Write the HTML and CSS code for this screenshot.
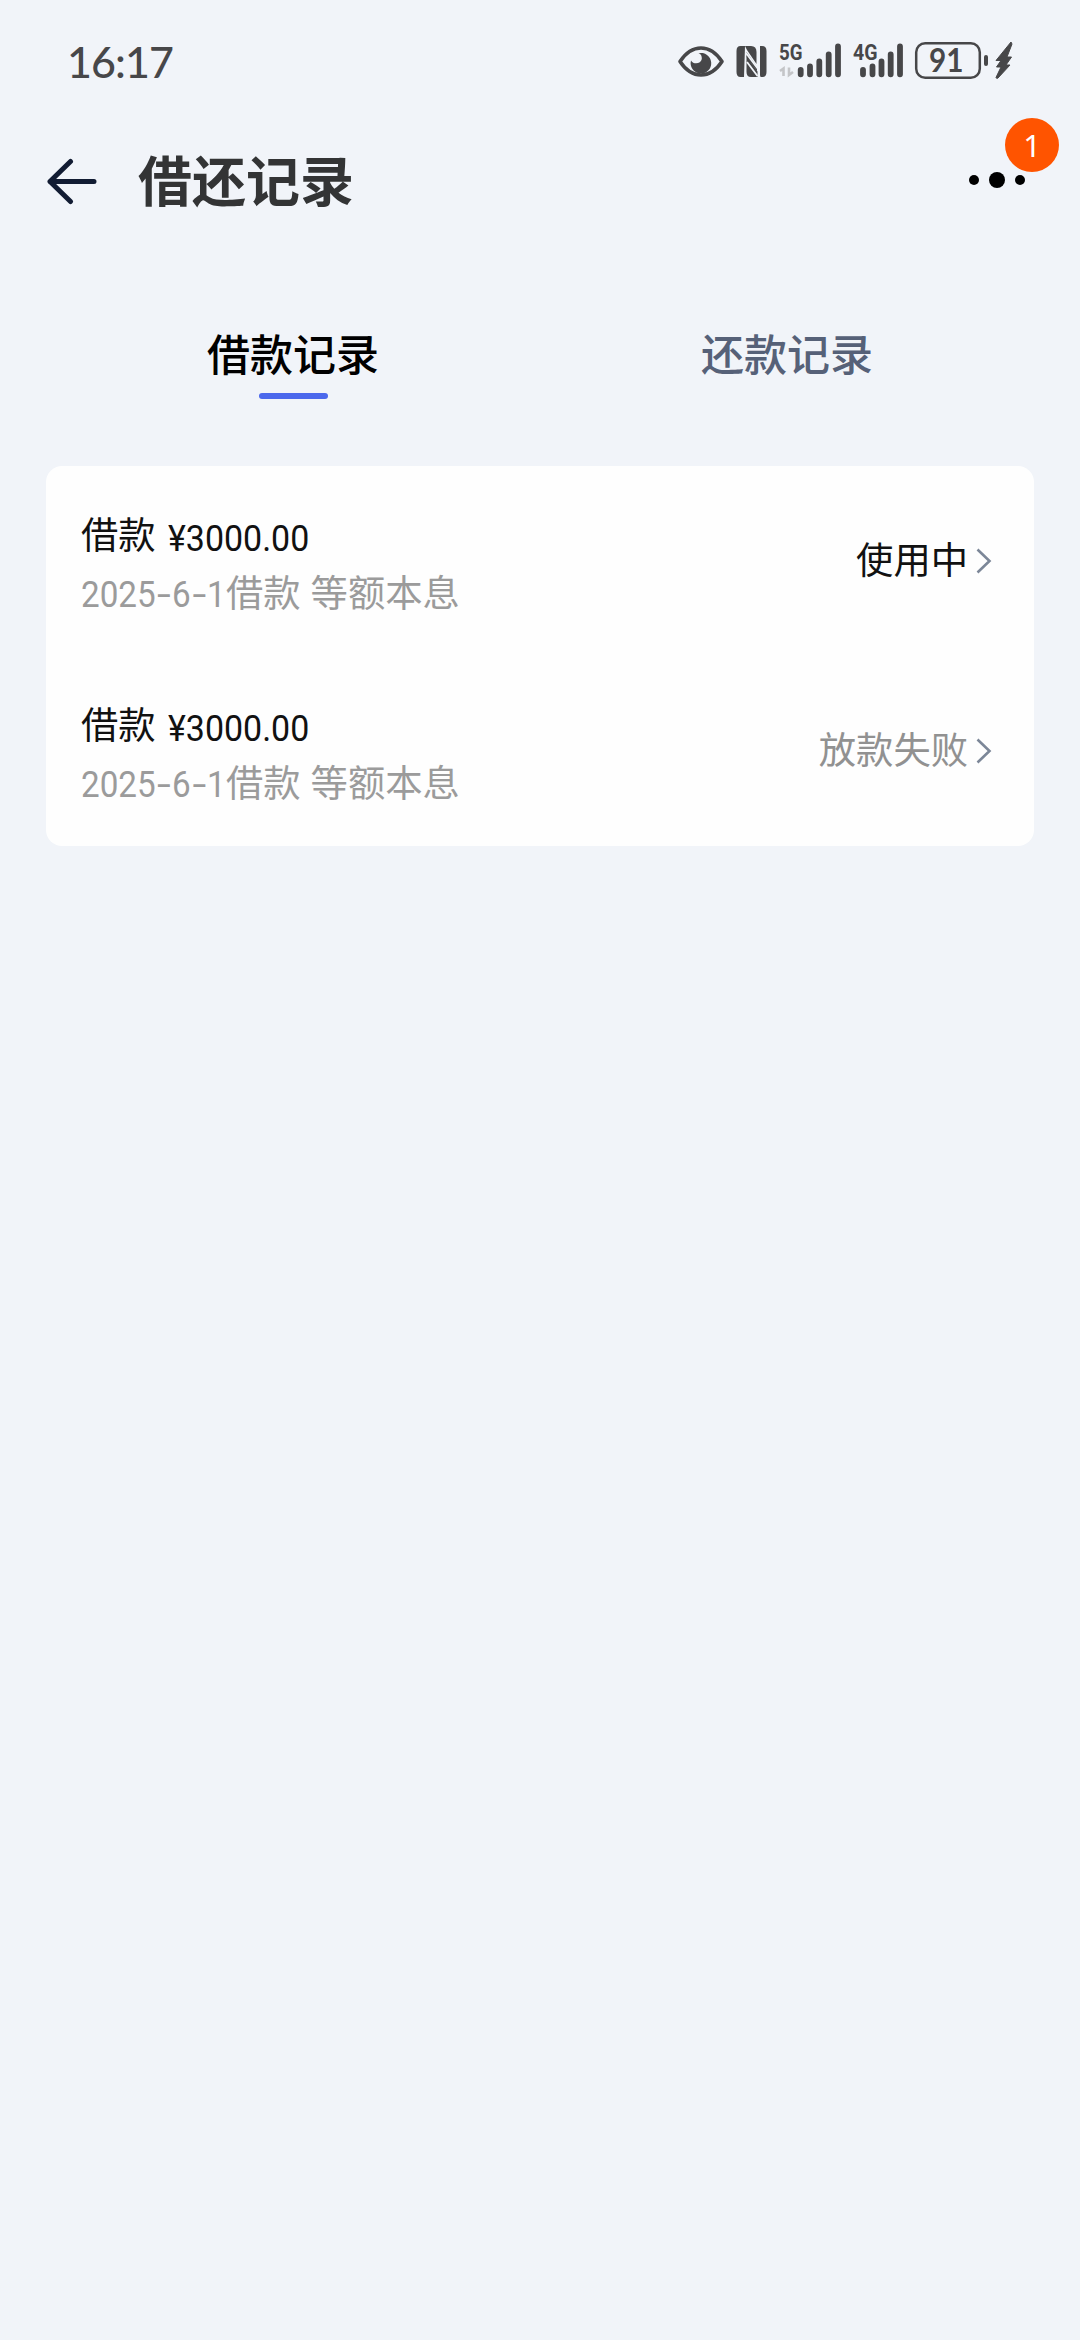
FILE: index.html
```html
<!DOCTYPE html>
<html lang="zh-CN">
<head>
<meta charset="utf-8">
<title>借还记录</title>
<link rel="stylesheet" href="styles.css">
</head>
<body>
<header class="status">
  <time class="clock">16:17</time>
  <svg class="status-icons" width="380" height="90" viewBox="0 0 380 90" fill="#474749">
    <!-- eye comfort -->
    <path d="M20 41.500Q29 28 41 28T62 41.500Q53 55 41 55T20 41.500Z" fill="none" stroke="#474749" stroke-width="3.600" stroke-linejoin="round"/>
    <path d="M38.500 33.200A10.300 10.300 0 1 1 31 40.500C33.500 45 41 44 41.800 39C42 36 41 34 38.500 33.200Z"/>
    <!-- NFC -->
    <path d="M80.500 26H82.500V57H80.500Q76.500 57 76.500 52V31Q76.500 26 80.500 26ZM85 26H91Q96.500 26 96.500 32V44L87 30ZM86.500 36L97.500 51.500V57H91Q86.500 57 86.500 52ZM100 26H102Q106.500 26 106.500 31V52Q106.500 57 102.500 57H101Q100 57 100 55Z"/>
    <path d="M82 26H85L84 57H81ZM86.500 32L97 47V51L86.500 37Z"/>
    <path d="M86 33L98 49M87 42L97.500 56" stroke="#f1f4f9" stroke-width="1.800"/>
    <!-- 5G signal -->
    <text class="net" x="119" y="40" textLength="23.500" lengthAdjust="spacingAndGlyphs">5G</text>
    <path d="M123.500 56V48.500L120 51M129 47.500V55L133 52" fill="none" stroke="#c4c5c8" stroke-width="2.600"/>
    <g stroke="#474749" stroke-width="5.800" stroke-linecap="round">
      <path d="M140.700 49.800V54.300M150 46.500V54.300M159.300 41.500V54.300M168.700 34.500V54.300M178 26.500V54.300"/>
      <path d="M203 49.800V54.300M212.500 46.500V54.300M221.500 41.500V54.300M230.700 34.500V54.300M240 26.500V54.300"/>
    </g>
    <!-- 4G signal -->
    <text class="net" x="193" y="40" textLength="24.500" lengthAdjust="spacingAndGlyphs">4G</text>
    <!-- battery -->
    <rect x="256.200" y="23.200" width="63.600" height="34.600" rx="9" fill="none" stroke="#474749" stroke-width="2.500"/>
    <text class="level" x="269" y="52" textLength="34.500" lengthAdjust="spacingAndGlyphs">91</text>
    <rect x="324" y="35" width="4" height="11" rx="2"/>
    <path d="M351 22L336 40.500H341L336.500 47H341L336 57.500Q336.500 59 338 58L350 45H346L351.500 37H347L352 24Z" stroke="#474749" stroke-width="1"/>
  </svg>
</header>

<nav class="navbar">
  <svg class="back" width="52" height="48" viewBox="0 0 52 48" fill="none" stroke="#121c33" stroke-width="5" stroke-linecap="round" stroke-linejoin="round">
    <path d="M23.500 3.500L3 23.500L23.500 43.500M3 23.500H47"/>
  </svg>
  <h1 class="title">借还记录</h1>
  <div class="more">
    <i class="dot"></i><i class="dot dot-mid"></i><i class="dot"></i>
    <span class="badge">1</span>
  </div>
</nav>

<div class="tabs">
  <div class="tab tab-active">借款记录</div>
  <div class="tab">还款记录</div>
</div>

<main class="card">
  <section class="record">
    <div class="info">
      <div class="name">借款<span class="amount">¥3000.00</span></div>
      <div class="detail"><span class="date">2025<span class="dash">-</span>6<span class="dash">-</span>1</span>借款<span class="plan">等额本息</span></div>
    </div>
    <div class="state">使用中</div>
    <svg class="chevron" width="16" height="26" viewBox="0 0 16 26" fill="none" stroke="#7c8798" stroke-width="2.600"><path d="M1.500 1.500L13.500 13L1.500 24.500"/></svg>
  </section>
  <section class="record">
    <div class="info">
      <div class="name">借款<span class="amount">¥3000.00</span></div>
      <div class="detail"><span class="date">2025<span class="dash">-</span>6<span class="dash">-</span>1</span>借款<span class="plan">等额本息</span></div>
    </div>
    <div class="state state-failed">放款失败</div>
    <svg class="chevron" width="16" height="26" viewBox="0 0 16 26" fill="none" stroke="#7c8798" stroke-width="2.600"><path d="M1.500 1.500L13.500 13L1.500 24.500"/></svg>
  </section>
</main>
</body>
</html>
```
FILE: styles.css
```css
* { box-sizing: border-box; }
body {
  margin: 0;
  width: 1080px;
  height: 2340px;
  background: #f1f4f9;
  font-family: "Noto Sans CJK SC", sans-serif;
  color: #111;
}
.status {
  height: 120px;
  display: flex;
  justify-content: space-between;
  padding: 20px 40px 0 67px;
}
.clock {
  font: 500 43px/84px Lato, sans-serif;
  letter-spacing: -0.900px;
  color: #474749;
}
.net { font: 700 22px Roboto, sans-serif; }
.level { font: 700 32px Lato, sans-serif; }
.navbar {
  height: 124px;
  display: flex;
  align-items: center;
  padding: 0 55px 0 47px;
}
.back { display: block; }
.title {
  margin: 0 auto 0 39px;
  padding-bottom: 6px;
  font-size: 54px;
  line-height: 80px;
  font-weight: 700;
  color: #333435;
}
.more {
  position: relative;
  width: 56px;
  display: flex;
  align-items: center;
  justify-content: space-between;
  margin-top: -4px;
}
.dot { width: 10px; height: 10px; border-radius: 50%; background: #000; }
.dot-mid { width: 16px; height: 16px; }
.badge {
  position: absolute;
  left: 36px;
  top: -54px;
  width: 54px;
  height: 54px;
  border-radius: 50%;
  background: #ff5400;
  color: #fff;
  font: 400 31px/54px "Noto Sans", sans-serif;
  text-align: center;
}
.tabs {
  display: flex;
  padding: 64px 46px 0;
}
.tab {
  flex: 1;
  height: 158px;
  text-align: center;
  font-size: 43px;
  line-height: 88px;
  font-weight: 500;
  color: #566178;
}
.tab-active { color: #000; }
.tab-active::after {
  content: "";
  display: block;
  width: 69px;
  height: 6px;
  margin: -3px auto 0;
  border-radius: 3px;
  background: #4b68ec;
}
.card {
  width: 988px;
  height: 380px;
  margin: 0 auto;
  padding-right: 42px;
  padding-left: 35px;
  border-radius: 16px;
  background: #fefefe;
}
.record {
  height: 190px;
  display: flex;
  align-items: center;
}
.info { margin-right: auto; padding-top: 2px; }
.name, .detail {
  display: flex;
  height: 58px;
  font-size: 37.300px;
  line-height: 58px;
}
.detail { color: #9b9b9b; }
.amount, .date {
  font-family: Roboto, sans-serif;
  font-weight: 400;
  font-size: 36.500px;
  transform: scaleX(0.93);
  transform-origin: left;
}
.amount { margin-left: 12px; line-height: 69px; }
.date {
  width: 145px;
  line-height: 65px;
  white-space: nowrap;
  transform: scaleX(0.91);
}
.dash {
  display: inline-block;
  width: 18px;
  text-align: center;
  transform: scaleX(1.5);
}
.plan { margin-left: 10px; }
.state { font-size: 37.300px; line-height: 58px; padding-bottom: 6px; }
.state-failed { color: #919191; }
.chevron { margin-left: 8px; }
```
